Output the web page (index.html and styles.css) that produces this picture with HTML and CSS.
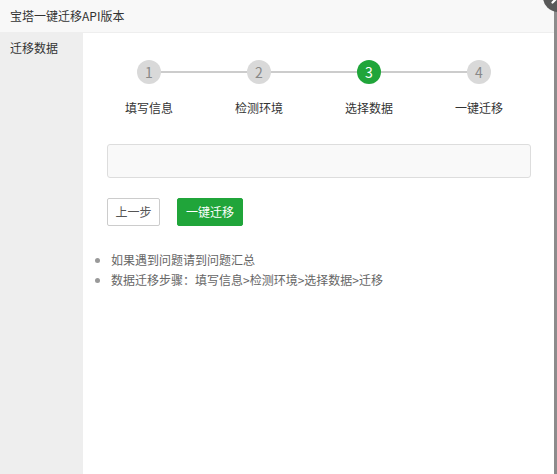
FILE: index.html
```html
<!DOCTYPE html>
<html lang="zh-CN">
<head>
<meta charset="utf-8">
<title>宝塔一键迁移API版本</title>
<link rel="stylesheet" href="styles.css">
</head>
<body>
<div class="layer">
  <div class="layer-title">宝塔一键迁移API版本</div>
  <div class="layer-body">
    <aside class="sidebar">
      <div class="side-item">迁移数据</div>
    </aside>
    <main class="content">
      <div class="steps">
        <div class="step"><span class="num">1</span><span class="label">填写信息</span></div>
        <div class="step"><span class="num">2</span><span class="label">检测环境</span></div>
        <div class="step active"><span class="num">3</span><span class="label">选择数据</span></div>
        <div class="step last"><span class="num">4</span><span class="label">一键迁移</span></div>
      </div>
      <div class="data-box"></div>
      <div class="actions">
        <button class="btn btn-default">上一步</button>
        <button class="btn btn-success">一键迁移</button>
      </div>
      <ul class="tips">
        <li>如果遇到问题请到问题汇总</li>
        <li>数据迁移步骤：填写信息&gt;检测环境&gt;选择数据&gt;迁移</li>
      </ul>
    </main>
  </div>
  <div class="edge-bar"></div>
  <div class="close-btn">
    <svg width="30" height="30" viewBox="0 0 30 30">
      <circle cx="15" cy="15" r="15" fill="#595959"/>
      <path d="M9.5 9.5 L20.5 20.5 M20.5 9.5 L9.5 20.5" stroke="#fff" stroke-width="2.2" stroke-linecap="round"/>
    </svg>
  </div>
</div>
</body>
</html>
```

FILE: styles.css
```css
* { box-sizing: border-box; }
html, body {
  margin: 0;
  padding: 0;
  width: 557px;
  height: 474px;
  overflow: hidden;
  background: #fff;
}
body {
  font-family: "Noto Sans CJK SC", "Microsoft YaHei", sans-serif;
  font-size: 12px;
  color: #333;
}
.layer {
  position: relative;
  width: 557px;
  height: 474px;
  display: flex;
  flex-direction: column;
}
.layer-title {
  height: 33px;
  line-height: 32px;
  padding-left: 10px;
  background: #f8f8f8;
  border-bottom: 1px solid #eee;
  color: #333;
  font-size: 12px;
}
.layer-body {
  flex: 1;
  display: flex;
}
.sidebar {
  width: 83px;
  background: #eee;
}
.side-item {
  height: 30px;
  line-height: 30px;
  padding-left: 10px;
  color: #333;
}
.content {
  flex: 1;
  padding: 27px 0 0 24px;
}
.steps {
  display: flex;
  margin-left: -13px;
  width: 440px;
}
.step {
  position: relative;
  width: 110px;
  display: flex;
  flex-direction: column;
  align-items: center;
}
.step::after {
  content: "";
  position: absolute;
  left: 55px;
  top: 11px;
  width: 110px;
  height: 2px;
  background: #ccc;
  z-index: 0;
}
.step.last::after { display: none; }
.num {
  position: relative;
  z-index: 1;
  width: 24px;
  height: 24px;
  border-radius: 50%;
  background: #d9d9d9;
  color: #888;
  font-size: 14px;
  line-height: 24px;
  text-align: center;
}
.step.active .num {
  background: #20a53a;
  color: #fff;
}
.label {
  margin-top: 15px;
  line-height: 18px;
  color: #333;
}
.data-box {
  margin-top: 27px;
  width: 424px;
  height: 34px;
  background: #f9f9f9;
  border: 1px solid #ddd;
  border-radius: 3px;
}
.actions {
  display: flex;
  gap: 17px;
  margin-top: 20px;
}
.btn {
  height: 28px;
  padding: 0;
  font-family: inherit;
  font-size: 12px;
  line-height: 26px;
  white-space: nowrap;
  text-align: center;
  border-radius: 2px;
  cursor: pointer;
}
.btn-default {
  width: 53px;
  background: #fff;
  border: 1px solid #ccc;
  color: #555;
}
.btn-success {
  width: 66px;
  background: #20a53a;
  border: 1px solid #20a53a;
  color: #fff;
}
.tips {
  margin: 24px 0 0 0;
  padding-left: 4px;
  color: #666;
  list-style: disc outside;
}
.tips li {
  line-height: 20px;
}
.tips li::marker {
  color: #999;
}
.edge-bar {
  position: absolute;
  top: 0;
  right: 0;
  width: 3px;
  height: 474px;
  background: #8c8c8c;
}
.close-btn {
  position: absolute;
  left: 543px;
  top: -18px;
  width: 30px;
  height: 30px;
}
.close-btn svg { display: block; }
```
